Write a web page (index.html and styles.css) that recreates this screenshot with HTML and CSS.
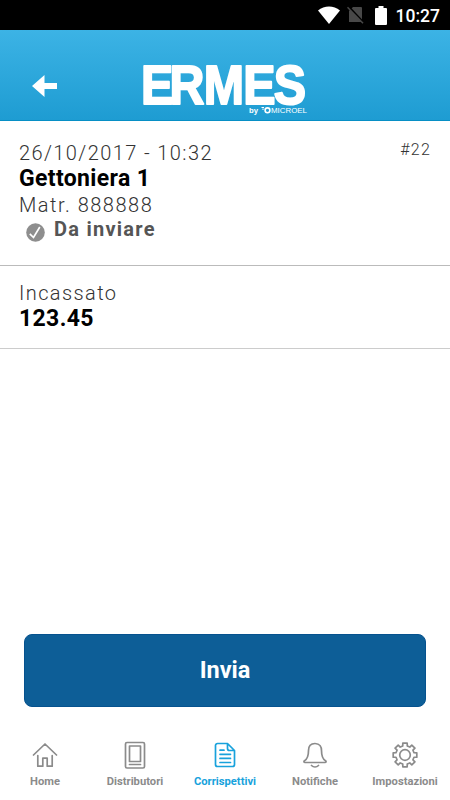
FILE: index.html
```html
<!DOCTYPE html>
<html lang="it">
  <head>
    <meta charset="UTF-8" />
    <meta name="viewport" content="width=device-width, initial-scale=1.0" />
    <title>Ermes - Corrispettivi</title>
    <link rel="stylesheet" href="styles.css">
  </head>

  <body>
    <div class="status-bar">
      <svg class="wifi" width="22" height="18" viewBox="0 0 22 18">
        <path d="M0 4.6C6.3-1 15.7-1 22 4.6L11 18Z" fill="#fff" />
      </svg>
      <svg class="no-sim" width="17" height="18" viewBox="0 0 17 18">
        <path d="M6 1h8a1 1 0 0 1 1 1v14H2V5z" fill="#484848" />
        <path d="M1.5 0.5l15 16" stroke="#000" stroke-width="2" />
        <path d="M0.5 1.3l15.5 16" stroke="#484848" stroke-width="1.5" />
      </svg>
      <svg class="battery" width="12" height="19" viewBox="0 0 12 19">
        <path d="M3.5 0h5v2H11a1 1 0 0 1 1 1v15a1 1 0 0 1-1 1H1a1 1 0 0 1-1-1V3a1 1 0 0 1 1-1h2.500z" fill="#fff" />
      </svg>
      <span class="clock">10:27</span>
    </div>

    <header>
      <a class="back" href="#" aria-label="Indietro">
        <svg width="25" height="22" viewBox="0 0 25 22">
          <path d="M0 11L12.500 0v8H25v6H12.500v8z" fill="#fff" />
        </svg>
      </a>
      <svg class="logo" width="180" height="84" viewBox="0 0 180 84">
        <text class="logo-name" transform="scale(.88 1)" x="0 32.400 71.300 116.300 150.800" y="73">ERMES</text>
        <text class="logo-by" x="108" y="82" textLength="9" lengthAdjust="spacingAndGlyphs">by</text>
        <circle cx="126.500" cy="79.300" r="2.400" fill="none" stroke="#fff" stroke-width="1.600" />
        <path d="M120.500 76.500h2.500M122 77.500v1.500" stroke="#fff" />
        <text class="logo-brand" x="130" y="82" textLength="36" lengthAdjust="spacingAndGlyphs">MICROEL</text>
      </svg>
    </header>

    <main>
      <section class="detail">
        <span class="number">#22</span>
        <p class="label date">26/10/2017 - 10:32</p>
        <p class="value name">Gettoniera 1</p>
        <p class="label serial">Matr. 888888</p>
        <p class="status">
          <svg width="19" height="19" viewBox="0 0 19 19">
            <circle cx="9.500" cy="9.500" r="9.300" fill="#8e8e8e" />
            <path d="M3.800 10.800l3.700 3.700L13.800 4" fill="none" stroke="#fff" stroke-width="1.700" />
          </svg>
          <span>Da inviare</span>
        </p>
      </section>
      <section class="amount">
        <p class="label collected">Incassato</p>
        <p class="value total">123.45</p>
      </section>
    </main>

    <button class="send-btn">Invia</button>

    <nav class="tab-bar">
      <a class="tab" href="#">
        <svg width="28" height="28" viewBox="0 0 28 28">
          <path d="M2.500 14L14 3l11.500 11M6.800 14.500v10.700h5v-8h4.400v8h5V14.500" />
        </svg>
        <span>Home</span>
      </a>
      <a class="tab" href="#">
        <svg width="28" height="28" viewBox="0 0 28 28">
          <rect x="4.500" y="1.500" width="19" height="25.500" rx="1.500" />
          <path d="M8.500 5h11v15.500h-11zM8.500 23.500h11" />
        </svg>
        <span>Distributori</span>
      </a>
      <a class="tab active" href="#">
        <svg width="28" height="28" viewBox="0 0 28 28">
          <path d="M16.500 2.500h-10a2 2 0 0 0-2 2v19a2 2 0 0 0 2 2h15a2 2 0 0 0 2-2V9.500zM16.500 2.500v5a2 2 0 0 0 2 2h5M9 9.200h4M9 13.300h10.500M9 17.400h10.500M9 21.500h10.500" />
        </svg>
        <span>Corrispettivi</span>
      </a>
      <a class="tab" href="#">
        <svg width="28" height="28" viewBox="0 0 28 28">
          <path d="M14 2.500C9 2.500 7.500 6 7.500 9.500c0 6-1 8.500-4 10.200-1 .8-.5 1.800.5 1.800h20c1 0 1.500-1 .5-1.800-3-1.700-4-4.200-4-10.200C20.500 6 19 2.500 14 2.500zM10.500 24.500c2 1.900 5 1.900 7 0" />
        </svg>
        <span>Notifiche</span>
      </a>
      <a class="tab" href="#">
        <svg width="28" height="28" viewBox="0 0 28 28">
          <path d="M11.800 2.200H16.200L16.300 5 18.800 6.050 20.800 4.100 23.900 7.200 21.950 9.200 23 11.750 25.800 11.800V16.200L23 16.250 21.950 18.800 23.900 20.800 20.800 23.900 18.800 21.950 16.250 23 16.200 25.800H11.800L11.750 23 9.200 21.950 7.200 23.900 4.100 20.800 6.050 18.800 5 16.250 2.200 16.200V11.800L5 11.750 6.050 9.200 4.100 7.200 7.200 4.100 9.200 6.050 11.750 5z" />
          <circle cx="14" cy="14" r="5.300" />
        </svg>
        <span>Impostazioni</span>
      </a>
    </nav>
  </body>
</html>
```
FILE: styles.css
```css
* {
  margin: 0;
  padding: 0;
  box-sizing: border-box;
}

body {
  font-family: Roboto, sans-serif;
  background-color: #fff;
  color: #555;
  display: flex;
  flex-direction: column;
  height: 100vh;
  overflow: hidden;
}

a {
  color: inherit;
  text-decoration: none;
}

svg {
  display: block;
  flex: none;
}

.status-bar {
  height: 30px;
  padding-right: 10px;
  background-color: #000;
  color: #fff;
  display: flex;
  justify-content: flex-end;
  align-items: center;
}

.no-sim {
  margin-left: 7px;
}

.battery {
  margin: 0 9px 0 11px;
}

.clock {
  font-size: 17.5px;
  font-weight: 500;
  line-height: 30px;
  padding-top: 2px;
}

header {
  height: 91px;
  background: linear-gradient(#3cb3e5, #1e9cd2);
  border-bottom: 1px solid #078fc5;
  display: flex;
  align-items: flex-start;
}

.back {
  margin: 45px 0 0 32px;
}

.logo {
  margin: 1px 0 0 84px;
}

.logo text {
  fill: #fff;
  font-family: "Liberation Sans", Arial, sans-serif;
}

.logo .logo-name {
  font-size: 55px;
  font-weight: bold;
  stroke: #fff;
  stroke-width: 2px;
  stroke-linejoin: round;
}

.logo .logo-by {
  font-size: 8px;
  font-weight: bold;
}

.logo .logo-brand {
  font-size: 8px;
}

.detail {
  height: 145px;
  padding: 19px 19px 0;
  border-bottom: 1px solid #bbb;
}

.label {
  font-size: 20px;
  font-weight: 300;
  line-height: 26px;
  letter-spacing: 1.4px;
  color: #333;
}

.serial {
  padding-top: 1px;
  letter-spacing: 1.5px;
}

.value {
  font-size: 23px;
  font-weight: bold;
  line-height: 25px;
  letter-spacing: 0.35px;
  color: #000;
}

.number {
  float: right;
  margin-top: 1px;
  font-size: 16px;
  font-weight: 300;
  line-height: 18px;
  letter-spacing: 1.2px;
  color: #333;
}

.status {
  display: flex;
  padding-left: 7px;
  font-size: 20px;
  font-weight: bold;
  line-height: 22px;
  letter-spacing: 1.25px;
}

.status svg {
  margin: 5px 9px 0 0;
}

.amount {
  height: 83px;
  padding-top: 14px;
  padding-left: 19px;
  border-bottom: 1px solid #ccc;
}

.send-btn {
  height: 73px;
  margin: auto 24px 27px;
  padding-bottom: 2px;
  border: 1px solid #06528e;
  border-radius: 8px;
  background-color: #0d5e97;
  color: #fff;
  font-family: inherit;
  font-size: 23.5px;
  font-weight: bold;
}

.tab-bar {
  height: 66px;
  display: grid;
  grid-template-columns: repeat(5, 90px);
}

.tab {
  display: flex;
  flex-direction: column;
  align-items: center;
  padding-top: 7px;
  color: #8b8b8b;
  font-size: 11.2px;
  font-weight: bold;
  line-height: 14px;
}

.tab svg {
  fill: none;
  stroke: currentColor;
  stroke-width: 1.7;
  stroke-linejoin: round;
  stroke-linecap: round;
  margin-bottom: 6px;
}

.tab.active {
  color: #18a2dc;
}
```
